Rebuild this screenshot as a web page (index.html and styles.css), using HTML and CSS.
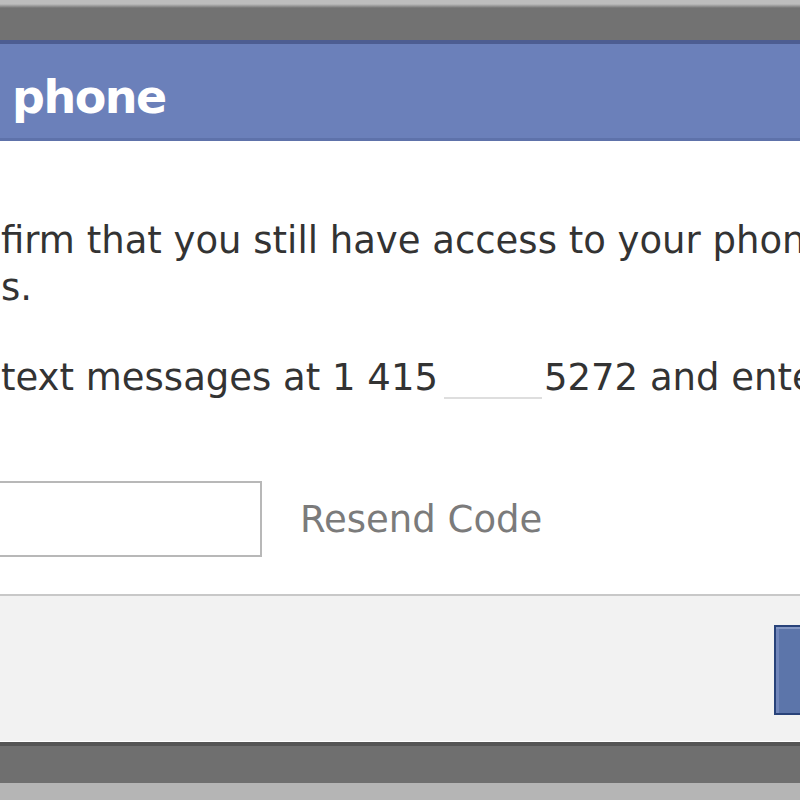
FILE: index.html
```html
<!DOCTYPE html>
<html lang="en">
<head>
  <meta charset="UTF-8" />
  <title>Confirm phone</title>
  <link rel="stylesheet" href="styles.css">
</head>
<body>
  <div class="shade-top"></div>
  <div class="dialog">
    <div class="dialog-title">phone</div>
    <div class="dialog-body">
      <p class="line">firm that you still have access to your phone</p>
      <p class="line">s.</p>
      <p class="line gap">text messages at 1 415<span class="blank"></span>5272 and enter</p>
      <div class="code-row">
        <input class="code-input" type="text" />
        <a class="resend" href="#">Resend Code</a>
      </div>
    </div>
    <div class="dialog-footer">
      <button class="confirm-btn"></button>
    </div>
  </div>
  <div class="shade-bottom"></div>
</body>
</html>
```

FILE: styles.css
```css
html, body { margin: 0; padding: 0; }
body { width: 800px; height: 800px; overflow: hidden; background: #b5b5b5; font-family: "DejaVu Sans", "Liberation Sans", sans-serif; color: #333; }
.shade-top { height: 40px; background: linear-gradient(#bdbdbd 0, #bdbdbd 4px, #727272 8px, #727272 100%); }
.dialog { width: 800px; overflow: hidden; background: #fff; }
.dialog-title { height: 101px; box-sizing: border-box; border-top: 4px solid #4d5d91; border-bottom: 3px solid #5e72aa; background: #6b80ba; color: #fff; font-weight: 700; font-size: 46px; letter-spacing: -1.5px; line-height: 54px; padding: 26px 0 0 12px; }
.dialog-body { padding: 76px 0 37px 0; }
.line { margin: 0; font-size: 37px; line-height: 47px; white-space: nowrap; padding-left: 1px; }
.line.gap { margin-top: 43px; }
.blank { display: inline-block; width: 98px; height: 2px; margin: 0 2px 0 6px; background: #dedede; vertical-align: -9px; }
.code-row { display: flex; align-items: center; gap: 38px; margin-top: 80px; }
.code-input { margin-left: -20px; width: 282px; height: 76px; box-sizing: border-box; border: 2px solid #b8b8b8; background: #fff; }
.resend { font-size: 37px; color: #7b7b7b; text-decoration: none; }
.dialog-footer { height: 148px; box-sizing: border-box; border-top: 2px solid #c8c8c8; background: #f2f2f2; border-bottom: 1px solid #fff; padding: 29px 0 0 774px; }
.confirm-btn { width: 120px; height: 90px; border: 2px solid #29437a; background: #5c75aa; box-shadow: inset 0 2px 0 #8598c4, inset 3px 0 0 #7287bb; }
.shade-bottom { height: 41px; box-sizing: border-box; border-top: 4px solid #555; background: #6f6f6f; }
```
